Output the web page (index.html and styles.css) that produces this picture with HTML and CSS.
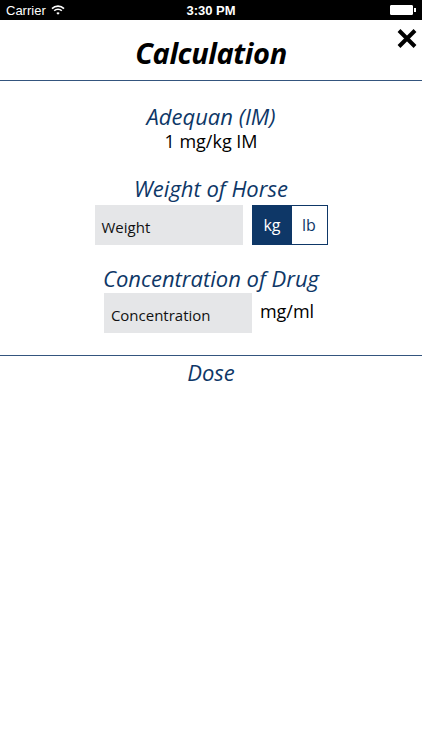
FILE: index.html
```html
<!DOCTYPE html>
<html lang="en">
<head>
    <meta charset="UTF-8">
    <meta name="viewport" content="width=device-width, initial-scale=1.0">
    <title>Calculation</title>
    <link rel="stylesheet" href="styles.css">
</head>
<body>

    <!-- Status bar -->
    <div class="status-bar">
        <div class="carrier">
            Carrier
            <svg class="wifi" width="14" height="10" viewBox="0 0 14 10">
                <path d="M1 3.6 A8.5 8.5 0 0 1 13 3.6" fill="none" stroke="#fff" stroke-width="1.6"/>
                <path d="M3.2 5.8 A5.4 5.4 0 0 1 10.8 5.8" fill="none" stroke="#fff" stroke-width="1.6"/>
                <path d="M5.3 8 L7 9.8 L8.7 8 A2.4 2.4 0 0 0 5.3 8 Z" fill="#fff"/>
            </svg>
        </div>
        <div class="time">3:30 PM</div>
        <div class="battery">
            <span class="battery-body"></span><span class="battery-tip"></span>
        </div>
    </div>

    <!-- Header -->
    <div class="header">
        <h1>Calculation</h1>
        <svg class="close" width="20" height="19" viewBox="0 0 20 19">
            <path d="M2 1.5 L18 17.5 M18 1.5 L2 17.5" stroke="#000" stroke-width="4"/>
        </svg>
    </div>

    <!-- Calculator form -->
    <div class="content">
        <h2>Adequan (IM)</h2>
        <p class="dosage">1 mg/kg IM</p>

        <h2 class="section-title">Weight of Horse</h2>
        <div class="row">
            <div class="field">Weight</div>
            <div class="units">
                <span class="unit active">kg</span>
                <span class="unit">lb</span>
            </div>
        </div>

        <h2 class="section-title second">Concentration of Drug</h2>
        <div class="row row-conc">
            <div class="field">Concentration</div>
            <span class="suffix">mg/ml</span>
        </div>
    </div>

    <div class="result">
        <h2>Dose</h2>
    </div>

</body>
</html>
```

FILE: styles.css
```css
body {
    margin: 0;
    padding: 0;
    background-color: #fff;
    font-family: "Open Sans", "Noto Sans", sans-serif;
    width: 422px;
    height: 750px;
    overflow: hidden;
}

h1, h2, p {
    margin: 0;
}

/* Status bar */
.status-bar {
    height: 20px;
    background-color: #000;
    color: #fff;
    font-family: "Liberation Sans", Arial, sans-serif;
    font-size: 13px;
    display: flex;
    align-items: center;
    justify-content: space-between;
    padding: 0 6px;
}

.carrier {
    display: flex;
    align-items: center;
    gap: 5px;
    width: 100px;
}

.time {
    font-weight: bold;
    font-size: 13px;
}

.battery {
    width: 100px;
    display: flex;
    justify-content: flex-end;
    align-items: center;
}

.battery-body {
    width: 21px;
    height: 8px;
    background-color: #fff;
    border: 1px solid #fff;
    border-radius: 1px;
}

.battery-tip {
    width: 2px;
    height: 4px;
    background-color: #fff;
    margin-left: 1px;
}

/* Header */
.header {
    height: 60px;
    border-bottom: 1px solid #34557e;
    display: flex;
    justify-content: center;
    align-items: center;
    position: relative;
}

.header h1 {
    font-size: 29px;
    font-style: italic;
    font-weight: bold;
    color: #000;
    letter-spacing: -0.4px;
    margin-top: 4px;
}

.close {
    position: absolute;
    right: 5px;
    top: 9px;
}

/* Form */
.content {
    display: flex;
    flex-direction: column;
    align-items: center;
    padding-top: 21px;
    padding-bottom: 22px;
    border-bottom: 1px solid #34557e;
}

.content h2,
.result h2 {
    font-size: 22px;
    font-style: italic;
    font-weight: normal;
    color: #0e3767;
    line-height: 28px;
}

.dosage {
    font-size: 18px;
    line-height: 24px;
    color: #000;
    margin-top: -1px;
}

.section-title {
    margin-top: 21px;
}

.section-title.second {
    margin-top: 19px;
}

.row {
    display: flex;
    align-items: center;
    margin-top: 3px;
}

.row-conc {
    margin-top: 1px;
    margin-right: 4px;
}

.field {
    height: 40px;
    width: 148px;
    background-color: #e5e6e8;
    display: flex;
    align-items: center;
    box-sizing: border-box;
    padding: 4px 0 0 7px;
    font-size: 15px;
    color: #111;
}

.units {
    display: flex;
    margin-left: 9px;
    border: 1px solid #0e3767;
    height: 40px;
    box-sizing: border-box;
}

.unit {
    width: 35px;
    display: flex;
    align-items: center;
    justify-content: center;
    font-size: 16px;
    color: #0e3767;
}

.unit.active {
    width: 39px;
    background-color: #0e3767;
    color: #fff;
}

.suffix {
    margin-left: 8px;
    font-size: 18px;
    color: #000;
    margin-bottom: 4px;
}

.result {
    display: flex;
    justify-content: center;
    padding-top: 2px;
}
```
